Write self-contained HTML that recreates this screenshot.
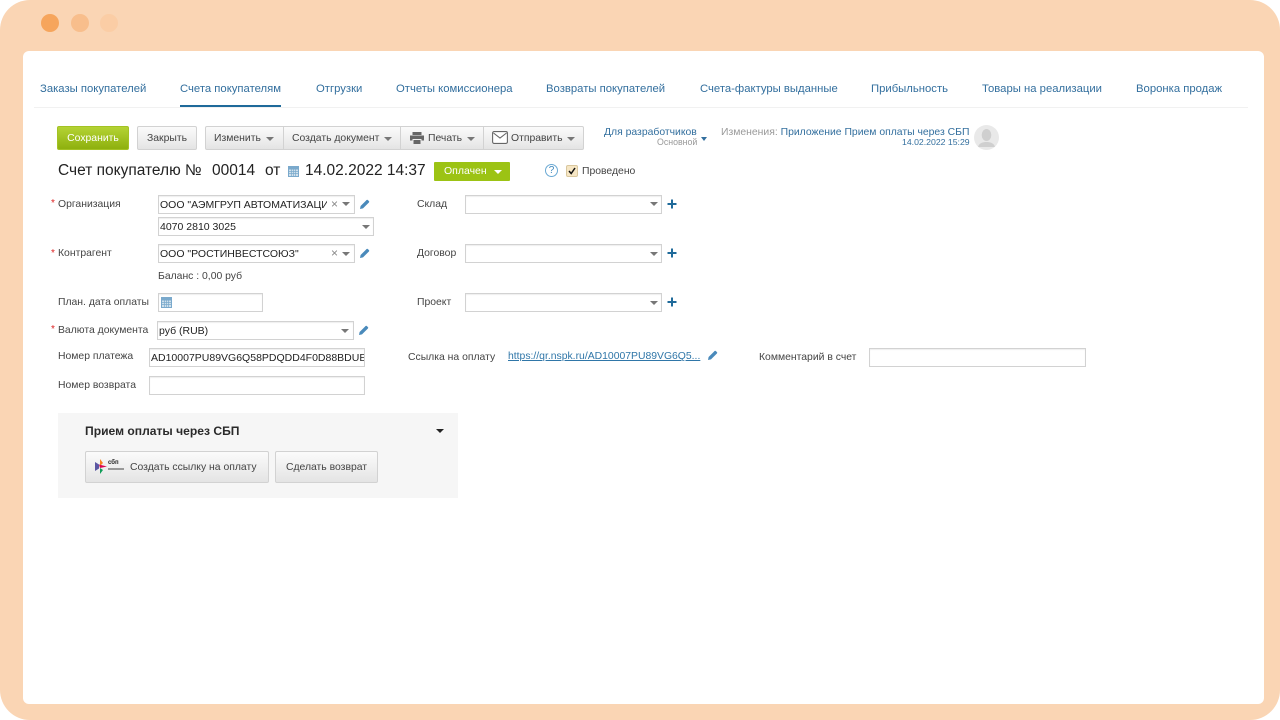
<!DOCTYPE html>
<html lang="ru"><head><meta charset="utf-8"><title>Счет покупателю</title>
<style>
html,body{margin:0;padding:0;width:1280px;height:720px;overflow:hidden;background:#fff}
*{box-sizing:border-box}
body{font-family:"Liberation Sans",sans-serif;font-size:10.4px;color:#444;position:relative}
#f{position:absolute;inset:0;background:#fad5b4;border-radius:30px;overflow:hidden;filter:blur(.35px)}
#c{position:absolute;left:23px;top:51px;width:1241px;height:653px;background:#fff;border-radius:6px}
.a{position:absolute;white-space:nowrap}
.dot{position:absolute;top:14px;width:18px;height:18px;border-radius:50%}
.tab{position:absolute;top:82px;font-size:11.3px;line-height:15px;color:#336f9e;white-space:nowrap}
.btn{position:absolute;top:126px;height:24px;background:linear-gradient(#fbfbfb,#e4e4e4);border:1px solid #d2d2d2;border-radius:2px;line-height:23px;text-align:center;color:#444;font-size:10.4px;white-space:nowrap}
.lbl{position:absolute;font-size:10.4px;line-height:13px;margin-top:1px;color:#444;white-space:nowrap}
.req{position:absolute;font-size:10px;line-height:10px;color:#d22}
.inp{position:absolute;height:19px;background:#fff;border:1px solid #d2d2d2;box-shadow:inset 0 1px 1px #eee;font-size:10.5px;line-height:18px;color:#222;padding-left:1px;white-space:nowrap;overflow:hidden}
.car{position:absolute;width:0;height:0;border-left:4px solid transparent;border-right:4px solid transparent;border-top:4px solid #777}
.x{position:absolute;font-size:12px;line-height:12px;color:#888}
svg{position:absolute;display:block}
</style></head><body>
<div id="f">
<div class="dot" style="left:41px;background:#f6a55c"></div>
<div class="dot" style="left:71px;background:#f8be8c"></div>
<div class="dot" style="left:100px;background:#fbcda5"></div>
<div id="c"></div>

<div class="a" style="left:34px;top:107px;width:1214px;height:1px;background:#f1f1f1"></div>
<div class="tab" style="left:40px">Заказы покупателей</div>
<div class="tab" style="left:180px">Счета покупателям</div>
<div class="a" style="left:180px;top:105px;width:101px;height:2px;background:#1f6a9a"></div>
<div class="tab" style="left:316px">Отгрузки</div>
<div class="tab" style="left:396px">Отчеты комиссионера</div>
<div class="tab" style="left:546px">Возвраты покупателей</div>
<div class="tab" style="left:700px">Счета-фактуры выданные</div>
<div class="tab" style="left:871px">Прибыльность</div>
<div class="tab" style="left:982px">Товары на реализации</div>
<div class="tab" style="left:1136px">Воронка продаж</div>

<div class="btn" style="left:57px;width:72px;background:linear-gradient(#b4d334,#8eb00e);border-color:#a3c224;color:#fff">Сохранить</div>
<div class="btn" style="left:137px;width:60px">Закрыть</div>
<div class="btn" style="left:205px;width:79px;text-align:left;padding-left:8px;border-radius:2px 0 0 2px">Изменить</div><div class="car" style="left:266px;top:137px"></div>
<div class="btn" style="left:283px;width:118px;text-align:left;padding-left:8px;border-radius:0">Создать документ</div><div class="car" style="left:384px;top:137px"></div>
<div class="btn" style="left:400px;width:84px;text-align:left;padding-left:27px;border-radius:0">Печать</div><div class="car" style="left:467px;top:137px"></div>
<svg style="left:409px;top:131px" width="16" height="14" viewBox="0 0 16 14"><path d="M3.500 1h9v3h-9zM1 4.500h14v5h-2.500V8h-9v1.500H1zM4.500 9h7v4h-7z" fill="#666"/></svg>
<div class="btn" style="left:483px;width:101px;text-align:left;padding-left:27px;border-radius:0 2px 2px 0">Отправить</div><div class="car" style="left:567px;top:137px"></div>
<svg style="left:492px;top:131px" width="16" height="13" viewBox="0 0 16 13"><rect x=".6" y=".6" width="14.800" height="11.800" rx="1.500" fill="#fff" stroke="#666" stroke-width="1.100"/><path d="M1.500 2l6.500 5 6.500-5" fill="none" stroke="#666" stroke-width="1.100"/></svg>

<div class="a" style="left:604px;top:126px;font-size:10.4px;line-height:13px;color:#336f9e">Для разработчиков</div>
<div class="a" style="left:657px;top:136px;font-size:8.800px;line-height:12px;color:#999">Основной</div>
<div class="car" style="left:701px;top:137px;border-top-color:#336f9e;border-left-width:3.500px;border-right-width:3.500px"></div>
<div class="a" style="left:721px;top:126px;font-size:10.4px;line-height:13px;color:#999">Изменения: <span style="color:#336f9e">Приложение Прием оплаты через СБП</span></div>
<div class="a" style="left:902px;top:136px;font-size:8.700px;line-height:12px;color:#336f9e">14.02.2022 15:29</div>
<div class="a" style="left:974px;top:125px;width:25px;height:25px;border-radius:50%;background:#e9e9e9;overflow:hidden">
<svg style="left:0;top:0" width="25" height="25" viewBox="0 0 25 25"><ellipse cx="12.500" cy="10" rx="4.800" ry="6" fill="#cfcfcf"/><path d="M4 22c1-4 5-5 8.500-5s7.500 1 8.500 5z" fill="#cfcfcf"/></svg></div>

<div class="a" style="left:58px;top:161px;font-size:15.500px;line-height:19px;color:#222">Счет покупателю №</div>
<div class="a" style="left:212px;top:161px;font-size:15.500px;line-height:19px;color:#222">00014</div>
<div class="a" style="left:265px;top:161px;font-size:15.500px;line-height:19px;color:#222">от</div>
<svg style="left:288px;top:165px" width="11" height="12" viewBox="0 0 11 12"><rect x="0" y="1" width="11" height="11" fill="#7aa9cc"/><rect x="1" y="4.500" width="9" height="6.500" fill="#cfe0ec"/><path d="M1 6.500h9M1 8.500h9M3.500 4.500v6.500M5.500 4.500v6.500M7.500 4.500v6.500" stroke="#7aa9cc" stroke-width=".7"/></svg>
<div class="a" style="left:305px;top:161px;font-size:15.500px;line-height:19px;color:#222">14.02.2022 14:37</div>
<div class="a" style="left:434px;top:162px;width:76px;height:19px;background:#9cc314;border-radius:1px;color:#fff;font-size:10.500px;line-height:18px;padding-left:10px">Оплачен</div>
<div class="car" style="left:494px;top:170px;border-top-color:#fff"></div>
<div class="a" style="left:545px;top:164px;width:13px;height:13px;border:1px solid #6aa9d4;border-radius:50%;color:#3f88bd;font-size:10px;line-height:11px;text-align:center">?</div>
<div class="a" style="left:566px;top:165px;width:12px;height:12px;background:#f6e6c4;border:1px solid #d9c79e;border-radius:2px"></div>
<svg style="left:567px;top:166px" width="10" height="10" viewBox="0 0 10 10"><path d="M2 5l2.200 2.500L8 2" fill="none" stroke="#111" stroke-width="1.500"/></svg>
<div class="lbl" style="left:582px;top:164px">Проведено</div>

<!-- left column -->
<div class="req" style="left:51px;top:199px">*</div><div class="lbl" style="left:58px;top:197px">Организация</div>
<div class="inp" style="left:158px;top:195px;width:197px"><span style="display:inline-block;width:167px;overflow:hidden;vertical-align:top">ООО "АЭМГРУП АВТОМАТИЗАЦИ</span></div>
<div class="x" style="left:331px;top:198px">×</div><div class="car" style="left:342px;top:202px"></div>
<div class="inp" style="left:158px;top:217px;width:216px">4070 2810 3025</div><div class="car" style="left:362px;top:225px"></div>
<div class="req" style="left:51px;top:249px">*</div><div class="lbl" style="left:58px;top:246px">Контрагент</div>
<div class="inp" style="left:158px;top:244px;width:197px">ООО "РОСТИНВЕСТСОЮЗ"</div>
<div class="x" style="left:331px;top:247px">×</div><div class="car" style="left:342px;top:252px"></div>
<div class="lbl" style="left:158px;top:269px">Баланс : 0,00 руб</div>
<div class="lbl" style="left:58px;top:295px">План. дата оплаты</div>
<div class="inp" style="left:158px;top:293px;width:105px"></div>
<svg style="left:161px;top:296px" width="11" height="12" viewBox="0 0 11 12"><rect x="0" y="1" width="11" height="11" fill="#7aa9cc"/><rect x="1" y="4.500" width="9" height="6.500" fill="#cfe0ec"/><path d="M1 6.500h9M1 8.500h9M3.500 4.500v6.500M5.500 4.500v6.500M7.500 4.500v6.500" stroke="#7aa9cc" stroke-width=".7"/></svg>
<div class="req" style="left:51px;top:325px">*</div><div class="lbl" style="left:58px;top:323px">Валюта документа</div>
<div class="inp" style="left:157px;top:321px;width:197px">руб (RUB)</div><div class="car" style="left:341px;top:329px"></div>
<div class="lbl" style="left:58px;top:349px">Номер платежа</div>
<div class="inp" style="left:149px;top:348px;width:216px">AD10007PU89VG6Q58PDQDD4F0D88BDUE</div>
<div class="lbl" style="left:58px;top:378px">Номер возврата</div>
<div class="inp" style="left:149px;top:376px;width:216px"></div>

<!-- pencils -->
<svg style="left:359px;top:199px" width="11" height="11" viewBox="0 0 11 11"><path d="M1 10l.6-3L7.500 1.100a1 1 0 0 1 1.400 0l1 1a1 1 0 0 1 0 1.400L4 9.400z" fill="#4a8abb"/></svg>
<svg style="left:359px;top:248px" width="11" height="11" viewBox="0 0 11 11"><path d="M1 10l.6-3L7.500 1.100a1 1 0 0 1 1.400 0l1 1a1 1 0 0 1 0 1.400L4 9.400z" fill="#4a8abb"/></svg>
<svg style="left:358px;top:325px" width="11" height="11" viewBox="0 0 11 11"><path d="M1 10l.6-3L7.500 1.100a1 1 0 0 1 1.400 0l1 1a1 1 0 0 1 0 1.400L4 9.400z" fill="#4a8abb"/></svg>
<svg style="left:707px;top:350px" width="11" height="11" viewBox="0 0 11 11"><path d="M1 10l.6-3L7.500 1.100a1 1 0 0 1 1.400 0l1 1a1 1 0 0 1 0 1.400L4 9.400z" fill="#4a8abb"/></svg>

<!-- middle column -->
<div class="lbl" style="left:417px;top:197px">Склад</div>
<div class="inp" style="left:465px;top:195px;width:197px"></div><div class="car" style="left:650px;top:202px"></div>
<div class="lbl" style="left:417px;top:246px">Договор</div>
<div class="inp" style="left:465px;top:244px;width:197px"></div><div class="car" style="left:650px;top:252px"></div>
<div class="lbl" style="left:417px;top:295px">Проект</div>
<div class="inp" style="left:465px;top:293px;width:197px"></div><div class="car" style="left:650px;top:301px"></div>
<svg style="left:667px;top:199px" width="10" height="10" viewBox="0 0 10 10"><path d="M5 .5v9M.5 5h9" stroke="#1f6a9a" stroke-width="2"/></svg>
<svg style="left:667px;top:248px" width="10" height="10" viewBox="0 0 10 10"><path d="M5 .5v9M.5 5h9" stroke="#1f6a9a" stroke-width="2"/></svg>
<svg style="left:667px;top:297px" width="10" height="10" viewBox="0 0 10 10"><path d="M5 .5v9M.5 5h9" stroke="#1f6a9a" stroke-width="2"/></svg>
<div class="lbl" style="left:408px;top:350px">Ссылка на оплату</div>
<div class="a" style="left:508px;top:350px;font-size:10.4px;line-height:13px;color:#2f76a8;text-decoration:underline">https://qr.nspk.ru/AD10007PU89VG6Q5...</div>
<div class="lbl" style="left:759px;top:350px">Комментарий в счет</div>
<div class="inp" style="left:869px;top:348px;width:217px"></div>

<!-- panel -->
<div class="a" style="left:58px;top:413px;width:400px;height:85px;background:#f6f6f6"></div>
<div class="a" style="left:85px;top:424px;font-size:12.100px;line-height:15px;font-weight:bold;color:#2a2a2a">Прием оплаты через СБП</div>
<div class="car" style="left:436px;top:429px;border-top-color:#222"></div>
<div class="btn" style="left:85px;top:451px;width:184px;height:32px;line-height:31px;text-align:left;padding-left:44px">Создать ссылку на оплату</div>
<svg style="left:95px;top:459px" width="12" height="15" viewBox="0 0 12 15"><path d="M0 3l4 2.500v4L0 12z" fill="#5b57a2"/><path d="M5 0l3 4-3 3z" fill="#f58220"/><path d="M4 5.500L12 7.500 5 9z" fill="#d90751"/><path d="M5 9l3 2-3 4z" fill="#0f9d58"/></svg>
<div class="a" style="left:108px;top:460px;font-size:6px;line-height:7px;font-weight:bold;color:#222">сбп</div>
<div class="a" style="left:108px;top:468px;width:16px;height:2px;background:#999"></div>
<div class="btn" style="left:275px;top:451px;width:103px;height:32px;line-height:31px">Сделать возврат</div>
</div>
</body></html>
